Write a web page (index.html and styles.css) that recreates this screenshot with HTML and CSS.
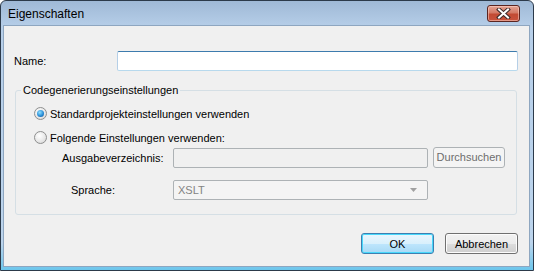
FILE: index.html
```html
<!DOCTYPE html>
<html lang="de">
<head>
    <meta charset="UTF-8">
    <title>Eigenschaften</title>
    <link rel="stylesheet" href="styles.css">
</head>
<body>
    <div class="window">
        <div class="title-bar">
            <span class="title">Eigenschaften</span>
            <button class="close-btn" aria-label="Schließen">
                <svg width="17" height="11" viewBox="0 0 17 11">
                    <path d="M4 1.5 L13 9.5 M13 1.5 L4 9.5" stroke="#3a2a2a" stroke-width="4" stroke-linecap="square"/>
                    <path d="M4 1.5 L13 9.5 M13 1.5 L4 9.5" stroke="#ffffff" stroke-width="2" stroke-linecap="square"/>
                </svg>
            </button>
        </div>
        <div class="client">
            <div class="name-row">
                <label class="name-label">Name:</label>
                <input type="text" class="text-input name-input">
            </div>

            <fieldset class="group">
                <legend>Codegenerierungseinstellungen</legend>
                <label class="radio-row">
                    <span class="radio checked"></span>
                    Standardprojekteinstellungen verwenden
                </label>
                <label class="radio-row second">
                    <span class="radio"></span>
                    Folgende Einstellungen verwenden:
                </label>
                <div class="field-row output-row">
                    <span class="field-label output-label">Ausgabeverzeichnis:</span>
                    <input type="text" class="text-input field-input" disabled>
                    <button class="browse-btn" disabled>Durchsuchen</button>
                </div>
                <div class="field-row lang-row">
                    <span class="field-label lang-label">Sprache:</span>
                    <div class="select">
                        <span>XSLT</span>
                        <svg width="7" height="4" viewBox="0 0 7 4"><path d="M0 0 H7 L3.5 4 Z" fill="#a0a0a0"/></svg>
                    </div>
                </div>
            </fieldset>

            <div class="button-row">
                <button class="btn default">OK</button>
                <button class="btn">Abbrechen</button>
            </div>
        </div>
    </div>
</body>
</html>
```

FILE: styles.css
```css
body {
    margin: 0;
    font-family: 'Liberation Sans', Arial, sans-serif;
    font-size: 11px;
    color: #000;
}

.window {
    width: 534px;
    height: 271px;
    box-sizing: border-box;
    border: 1px solid #2c3a4a;
    border-radius: 6px 6px 0 0;
    background: linear-gradient(180deg, #9fb9d6 0%, #b7cfe9 10%, #bcd4ec 90%, #6cc6ec 100%);
    padding: 0 3px 3px 2px;
    display: flex;
    flex-direction: column;
}

.title-bar {
    height: 24px;
    display: flex;
    align-items: center;
    justify-content: space-between;
    padding: 0 10px 0 5px;
}

.title {
    font-size: 12px;
    color: #000;
    padding-top: 2px;
}

.close-btn {
    width: 33px;
    height: 17px;
    margin-top: 1px;
    padding: 0;
    border: 1px solid #5b2520;
    border-radius: 3px;
    background: linear-gradient(180deg, #e5a494 0%, #d47a66 45%, #c24a33 55%, #c9533d 100%);
    box-shadow: inset 0 0 0 1px rgba(255, 220, 210, 0.5);
    display: flex;
    align-items: center;
    justify-content: center;
}

.client {
    flex: 1;
    background: #f0f0f0;
    border: 1px solid #8ea6c0;
    padding: 25px 11px 0 10px;
    display: flex;
    flex-direction: column;
}

.name-row {
    display: flex;
    align-items: center;
    height: 20px;
}

.name-label {
    width: 103px;
}

.text-input {
    box-sizing: border-box;
    height: 20px;
    border: 1px solid #abadb3;
    border-top-color: #3d7bad;
    border-left-color: #b5cfe7;
    border-right-color: #b5cfe7;
    border-bottom-color: #b7d9ed;
    border-radius: 2px;
    background: #fff;
    font: inherit;
    padding: 0 3px;
}

.name-input {
    width: 401px;
}

.group {
    margin: 13px 0 0 1px;
    width: 502px;
    height: 131px;
    box-sizing: border-box;
    border: 1px solid #d5dfe5;
    border-radius: 3px;
    padding: 10px 0 0 5px;
}

.group legend {
    padding: 0 2px;
    margin-left: 0;
}

.radio-row {
    display: flex;
    align-items: center;
    gap: 3px;
    height: 15px;
    margin-left: 13px;
}

.radio-row.second {
    margin-top: 9px;
}

.radio {
    width: 11px;
    height: 11px;
    border: 1px solid #8e8f8f;
    border-radius: 50%;
    background: radial-gradient(circle at 40% 35%, #ffffff 0%, #e6e6e6 60%, #cfcfcf 100%);
    position: relative;
}

.radio.checked::after {
    content: '';
    position: absolute;
    left: 2px;
    top: 2px;
    width: 7px;
    height: 7px;
    border-radius: 50%;
    background: radial-gradient(circle at 40% 35%, #8fe0ff 0%, #2b8fd8 55%, #0a4a8a 100%);
}

.field-row {
    display: flex;
    align-items: center;
}

.output-row {
    margin-top: 2px;
    height: 22px;
}

.field-label {
    box-sizing: border-box;
    white-space: nowrap;
}

.output-label {
    padding-left: 41px;
    width: 152px;
}

.lang-row {
    margin-top: 11px;
    height: 20px;
}

.lang-label {
    padding-left: 50px;
    width: 152px;
}

.field-input {
    width: 255px;
    border: 1px solid #adb2b5;
    background: #f0f0f0;
}

.browse-btn {
    margin-left: 5px;
    margin-top: -2px;
    width: 72px;
    height: 21px;
    box-sizing: border-box;
    border: 1px solid #adb2b5;
    border-radius: 3px;
    background: #f4f4f4;
    font: inherit;
    color: #6d6d6d;
    padding: 0;
}

.select {
    width: 255px;
    height: 20px;
    box-sizing: border-box;
    border: 1px solid #adb2b5;
    border-radius: 2px;
    background: #f4f4f4;
    color: #838383;
    display: flex;
    align-items: center;
    justify-content: space-between;
    padding: 0 10px 0 4px;
}

.button-row {
    display: flex;
    justify-content: flex-end;
    gap: 11px;
    margin-top: 18px;
}

.btn {
    width: 73px;
    height: 21px;
    box-sizing: border-box;
    border: 1px solid #707070;
    border-radius: 3px;
    background: linear-gradient(180deg, #f2f2f2 0%, #ebebeb 50%, #dddddd 51%, #cfcfcf 100%);
    box-shadow: inset 0 0 0 1px #fcfcfc;
    font: inherit;
    color: #000;
    padding: 0;
}

.btn.default {
    border-color: #3c7fb1;
    background: linear-gradient(180deg, #eaf6fd 0%, #d9f0fc 50%, #bee6fd 51%, #a7d9f5 100%);
    box-shadow: inset 0 0 0 1px #48d8fb;
}
```
